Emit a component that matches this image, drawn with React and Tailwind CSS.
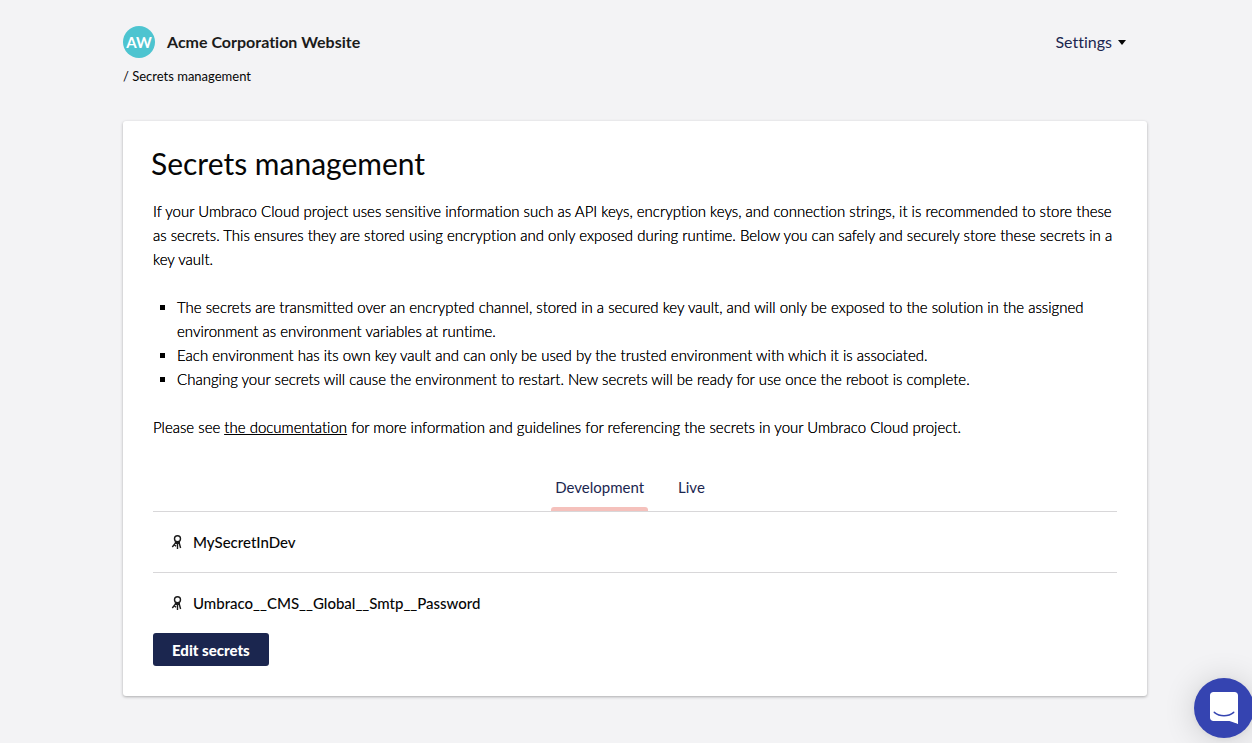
const KeyIcon = () => (
  <svg aria-hidden="true" className="h-4 w-4 shrink-0" viewBox="0 0 16 16" fill="none" stroke="#1b1b1b" strokeWidth="1.4">
    <circle cx="8.500" cy="4.800" r="3" />
    <path d="M6.500 7.500v1.500L3.300 13M5 10.500l2 1.800M8.500 8v7M10.300 7.500v1.800l1.300 4.700" />
    <path d="M6.500 9h4" strokeWidth="2" />
  </svg>
);

const secrets = ["MySecretInDev", "Umbraco__CMS__Global__Smtp__Password"];

export default function App() {
  return (
    <div className="min-h-screen bg-[#f3f3f5] pl-[18px] font-['Lato',sans-serif] text-[#060606] [font-variant-ligatures:none]">
      <div className="mx-auto max-w-[1024px] pt-[26px] pb-12">
        <header className="flex h-8 items-center justify-between pr-[21px]">
          <div className="flex items-center gap-3">
            <span className="flex h-8 w-8 items-center justify-center rounded-full bg-[#4dc4d0] text-[15px] font-bold text-white">AW</span>
            <span className="text-base font-bold text-[#1b1b1b]">Acme Corporation Website</span>
          </div>
          <button type="button" className="flex items-center gap-[6px] text-base text-[#1b264f]">
            Settings
            <svg aria-hidden="true" className="h-[5px] w-2" viewBox="0 0 8 5"><path d="M0 0h8L4 5z" fill="#060606" /></svg>
          </button>
        </header>
        <nav aria-label="Breadcrumb" className="mt-2 text-[13px] leading-5">/ Secrets management</nav>
        <main className="mt-[35px] rounded-[3px] bg-white px-[30px] pt-6 pb-[30px] shadow-[0_1px_3px_rgba(0,0,0,0.3)]">
          <h1 className="-ml-0.5 text-[30px] leading-[36px]">Secrets management</h1>
          <div className="mt-[18px] text-[15px] leading-6 font-light text-black [text-shadow:0_0_0_#000]">
            <p>If your Umbraco Cloud project uses sensitive information such as API keys, encryption keys, and connection strings, it is recommended to store these as secrets. This ensures they are stored using encryption and only exposed during runtime. Below you can safely and securely store these secrets in a key vault.</p>
            <ul className="my-6 list-[square] pl-6">
              <li>The secrets are transmitted over an encrypted channel, stored in a secured key vault, and will only be exposed to the solution in the assigned environment as environment variables at runtime.</li>
              <li>Each environment has its own key vault and can only be used by the trusted environment with which it is associated.</li>
              <li>Changing your secrets will cause the environment to restart. New secrets will be ready for use once the reboot is complete.</li>
            </ul>
            <p>Please see <a href="#documentation" className="underline">the documentation</a> for more information and guidelines for referencing the secrets in your Umbraco Cloud project.</p>
          </div>
          <div role="tablist" aria-label="Environments" className="mt-7 flex justify-center gap-[26px] border-b border-[#d8d7d9] pr-[10px] text-[15px] leading-6 text-[#1b264f]">
            <button type="button" role="tab" aria-selected="true" className="flex flex-col">
              <span className="px-1 py-2">Development</span>
              <span className="h-1 w-full rounded-t-[3px] bg-[#f5c1bc]" />
            </button>
            <button type="button" role="tab" aria-selected="false" className="px-1 pt-2 pb-3">Live</button>
          </div>
          <ul className="divide-y divide-[#d8d7d9]">
            {secrets.map((name) => (
              <li key={name} className="box-content flex h-[60px] items-center gap-2 pl-4 text-[15px] font-medium">
                <KeyIcon />
                {name}
              </li>
            ))}
          </ul>
          <button type="button" className="flex h-[33px] items-center rounded-[3px] bg-[#1b264f] px-[19px] pt-0.5 text-[15px] font-black text-white">Edit secrets</button>
        </main>
      </div>
      <button type="button" aria-label="Open chat" className="fixed right-[-2px] bottom-[5px] flex h-[60px] w-[60px] items-center justify-center rounded-full bg-[#3544b1] shadow-[0_1px_6px_rgba(0,0,0,0.06),0_2px_32px_rgba(0,0,0,0.16)]">
        <svg aria-hidden="true" className="h-8 w-7" viewBox="0 0 28 32">
          <path d="M28 32s-4.700-1.900-8.500-3H3.400C1.500 29 0 27.600 0 25.700V3.300C0 1.500 1.500 0 3.400 0h21.200C26.500 0 28 1.500 28 3.300z" fill="white" />
          <path d="M4.300 20.300c5.500 4.500 13.900 4.500 19.400 0" fill="none" stroke="#3544b1" strokeWidth="1.500" strokeLinecap="round" />
        </svg>
      </button>
    </div>
  );
}
